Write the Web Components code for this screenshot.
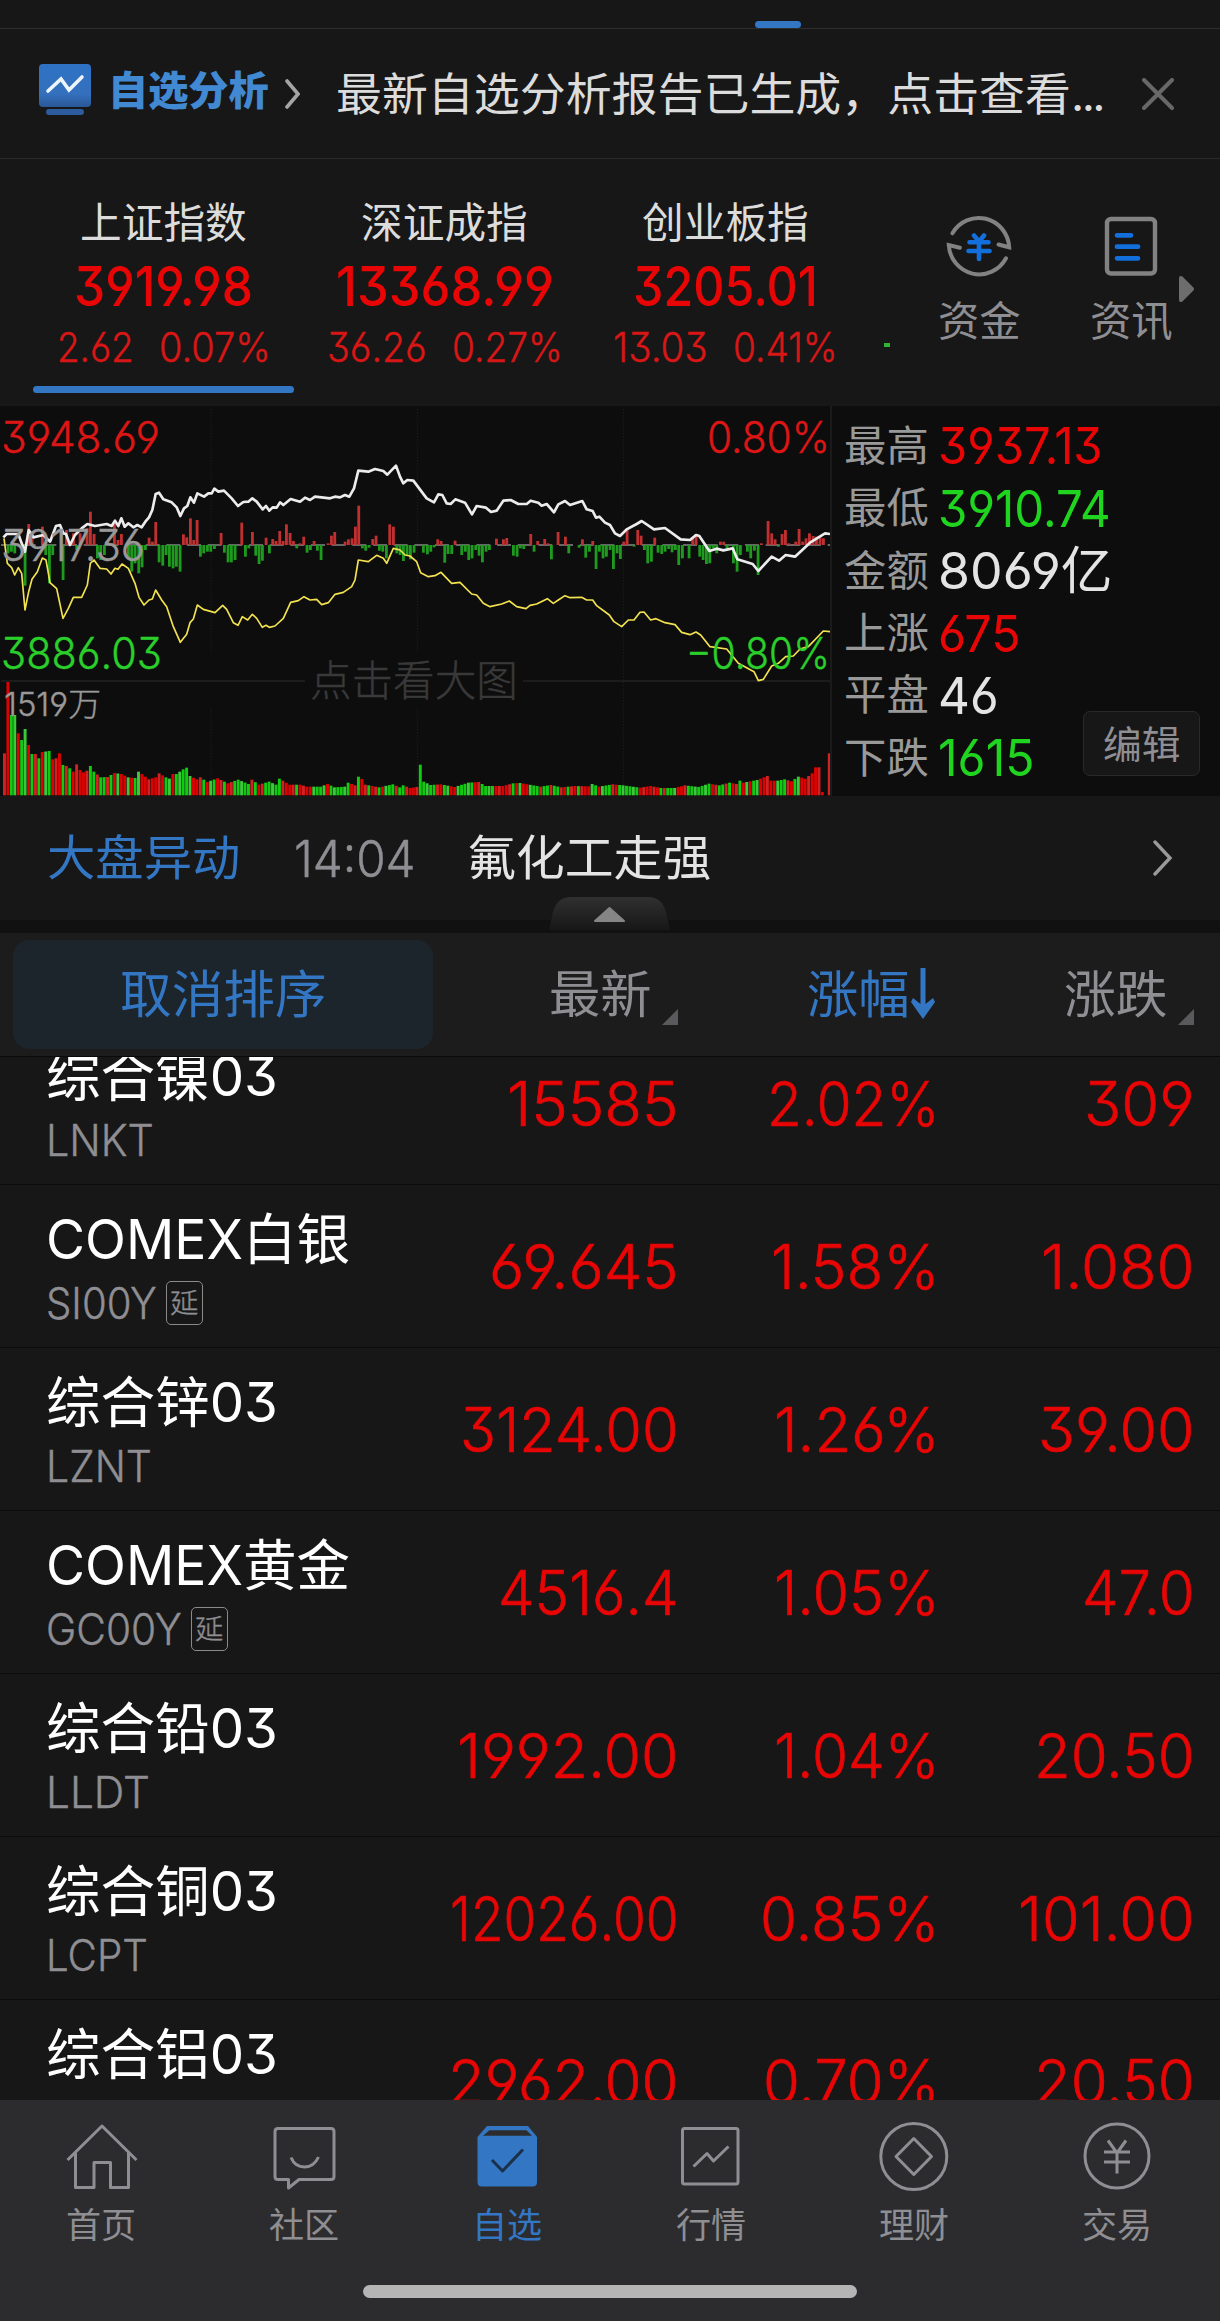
<!DOCTYPE html>
<html lang="zh-CN">
<head>
<meta charset="UTF-8">
<meta name="viewport" content="width=device-width, initial-scale=1.0">
<title>自选</title>
<style>
    :root {
        --bg: #171717;
        --red: #e80505;
        --green: #1fd51f;
        --blue: #3377c4;
        --grey: #8e8e93;
        --light: #e4e4e4;
    }

    body {
        margin: 0;
        background: var(--bg);
        font-family: Inter, "Noto Sans CJK SC", sans-serif;
        font-feature-settings: "cv03", "cv04", "cv09";
    }
</style>
</head>
<body>
<stock-app></stock-app>

<script>
// Base class: every element puts its template in an open shadow root
class BaseElement extends HTMLElement {
    constructor() {
        super();
        this.attachShadow({ mode: 'open' });
    }

    connectedCallback() {
        this.shadowRoot.innerHTML = this.template();
    }
}

/**
 * Text with a fixed ink width: <fit-text w="174" size="55">3919.98</fit-text>
 * - w: width in px, size: font size in px
 */
class FitText extends BaseElement {
    template() {
        return `
            <style>
                :host { display: inline-block; flex: none; white-space: nowrap; line-height: 1; }
                span { display: inline-block; transform-origin: 0 50%; }
            </style>
            <span><slot></slot></span>
        `;
    }

    connectedCallback() {
        super.connectedCallback();
        const size = Number(this.getAttribute('size'));
        const w = Number(this.getAttribute('w'));
        const bearing = size * 0.045;
        const span = this.shadowRoot.querySelector('span');
        this.style.fontSize = size + 'px';
        this.style.height = size + 'px';
        const scale = (w + bearing * 2) / span.getBoundingClientRect().width;
        this.style.width = w + 'px';
        span.style.transform = `scaleX(${scale})`;
        span.style.marginLeft = -bearing + 'px';
    }
}

class TopStrip extends BaseElement {
    template() {
        return `
            <style>
                :host { display: flex; height: 28px; align-items: flex-end; border-bottom: 1px solid #2d2d2d; }
                i { width: 46px; height: 7px; margin-left: 755px; border-radius: 4px; background: var(--blue); }
            </style>
            <i></i>
        `;
    }
}

class ReportBanner extends BaseElement {
    template() {
        return `
            <style>
                :host { display: flex; align-items: center; height: 130px; box-sizing: border-box; padding: 0 46px 0 39px; border-bottom: 1px solid #2a2a2a; }
                svg { display: block; flex: none; }
                .logo { margin: -7px 19px 0 0; }
                .title { font-weight: 900; color: #4189d3; margin: -6px 18px 0 0; }
                .msg { color: #dcdcdc; margin: 2px 41px 0 38px; }
                .dots { letter-spacing: -2.5px; }
            </style>
            <svg class="logo" width="52" height="52" viewBox="0 0 52 52">
                <defs>
                    <linearGradient id="g" x1="0" y1="0" x2="0" y2="1">
                        <stop offset="0" stop-color="#2e72c4"/><stop offset=".7" stop-color="#3470bd"/><stop offset="1" stop-color="#2a5896"/>
                    </linearGradient>
                </defs>
                <rect width="52" height="43" rx="4" fill="url(#g)"/>
                <path d="M9 27L22 15L30 26L43 13" fill="none" stroke="#eef4fb" stroke-width="3.6" stroke-linecap="round"/>
                <rect x="7" y="45" width="38" height="6" rx="3" fill="#2c5c9d"/>
            </svg>
            <fit-text class="title" w="157" size="40">自选分析</fit-text>
            <svg width="15" height="32" viewBox="0 0 15 32"><path d="M2 3L13 16L2 29" fill="none" stroke="#a5a5a5" stroke-width="3.6" stroke-linecap="round"/></svg>
            <fit-text class="msg" w="763" size="45">最新自选分析报告已生成，点击查看<span class="dots">...</span></fit-text>
            <svg width="32" height="32" viewBox="0 0 32 32"><path d="M2 2L30 30M30 2L2 30" stroke="#686868" stroke-width="4" stroke-linecap="round"/></svg>
        `;
    }
}

class IndexCard extends BaseElement {
    template() {
        const [price, change, pct] = ['price', 'change', 'pct'].map(k => this.getAttribute(k).split('|'));
        return `
            <style>
                :host { display: flex; flex-direction: column; align-items: center; flex: none; width: 281px; height: 247px; box-sizing: border-box; padding-top: 43px; color: var(--red); }
                .name { color: #dcdcdc; }
                .price { margin-top: 15px; font-weight: 500; }
                .row { display: flex; gap: 29px; margin: 13px 0 18px; font-weight: 300; -webkit-text-stroke: 0.4px; color: #d81616; }
                i { width: 261px; height: 7px; border-radius: 4px; }
                :host([active]) i { background: var(--blue); }
            </style>
            <fit-text class="name" w="163" size="42"><slot></slot></fit-text>
            <fit-text class="price" w="${price[1]}" size="55">${price[0]}</fit-text>
            <div class="row">
                <fit-text w="${change[1]}" size="41">${change[0]}</fit-text>
                <fit-text w="${pct[1]}" size="41">${pct[0]}</fit-text>
            </div>
            <i></i>
        `;
    }
}

class IndexBar extends BaseElement {
    template() {
        return `
            <style>
                :host { display: flex; height: 247px; padding-left: 23px; overflow: hidden; }
                .dash { width: 6px; height: 4px; margin: 184px 49px 0 18px; background: #2fb52f; }
                .tool { display: flex; flex-direction: column; align-items: center; width: 80px; margin-right: 72px; padding-top: 52px; color: var(--grey); }
                .tool svg { margin-bottom: 20px; }
                .more { margin: 116px 0 0 -65px; }
            </style>
            <index-card active price="3919.98|174" change="2.62|73" pct="0.07%|108">上证指数</index-card>
            <index-card price="13368.99|213" change="36.26|96" pct="0.27%|107">深证成指</index-card>
            <index-card price="3205.01|180" change="13.03|91" pct="0.41%|101">创业板指</index-card>
            <div class="dash"></div>
            <div class="tool">
                <svg width="70" height="70" viewBox="0 0 70 70" fill="none" stroke-linecap="round">
                    <g stroke="#828282" stroke-width="4">
                        <path d="M8.4 22.3A30.5 31 0 0 1 65.2 36.3L54.5 33.5"/>
                        <path d="M62 47.3A30.5 31 0 0 1 4.8 34L15.8 36.7"/>
                    </g>
                    <path d="M30 24.5L35 30.5L40 24.5M25.5 31.3H44.5M24.5 40H45.5M35 31V48" stroke="#126fdb" stroke-width="4.6"/>
                </svg>
                <fit-text w="79" size="41">资金</fit-text>
            </div>
            <div class="tool">
                <svg width="70" height="70" viewBox="0 0 70 70" fill="none" stroke-linecap="round">
                    <rect x="11" y="8" width="48" height="54.5" rx="4" stroke="#828282" stroke-width="4.4"/>
                    <path d="M21 24.3H35M21 35.7H42M21 47.3H42" stroke="#126fdb" stroke-width="4.8"/>
                </svg>
                <fit-text w="79" size="41">资讯</fit-text>
            </div>
            <svg class="more" width="17" height="28" viewBox="0 0 17 28"><path d="M3 3L14 14L3 25Z" fill="#6d6d6d" stroke="#6d6d6d" stroke-width="4" stroke-linejoin="round"/></svg>
        `;
    }
}

// Chart data, in thirds of a pixel from the chart's origin
const PRICE_LINE = '10,412 20,402 55,402 65,430 75,455 86,390 100,412 130,405 150,425 168,378 180,375 190,400 198,402 210,435 225,405 245,385 262,372 285,378 320,372 335,378 345,362 355,378 364,355 374,380 385,370 400,382 412,375 425,382 436,365 447,352 457,330 467,282 477,278 490,298 515,307 530,322 541,348 552,325 562,318 571,292 582,308 592,280 612,290 625,280 635,280 643,266 655,275 672,272 695,295 714,318 730,306 745,305 757,295 770,305 788,328 798,318 808,332 818,322 830,323 840,307 850,315 872,297 900,305 915,293 930,300 945,290 990,295 1005,290 1020,292 1035,285 1048,290 1062,265 1075,212 1105,215 1125,207 1150,213 1162,224 1188,197 1200,230 1210,250 1222,240 1240,242 1280,295 1302,307 1315,283 1327,285 1340,310 1352,312 1366,298 1395,308 1416,343 1430,318 1458,323 1473,336 1490,332 1510,302 1532,300 1555,312 1580,312 1592,302 1615,308 1625,317 1640,312 1662,337 1675,313 1695,303 1710,315 1747,303 1760,328 1778,333 1788,353 1798,350 1815,368 1830,375 1845,400 1860,408 1880,388 1910,372 1925,363 1962,388 1995,384 2042,418 2070,420 2088,405 2098,408 2128,453 2150,446 2170,451 2198,445 2212,478 2258,492 2275,513 2315,470 2337,482 2357,465 2385,470 2430,428 2475,400 2490,402';
const AVG_LINE = '12,415 22,490 35,503 44,525 55,503 65,520 75,630 86,575 96,538 112,515 127,474 138,480 150,548 170,566 189,655 205,625 220,592 245,592 262,555 271,490 282,480 300,505 320,507 333,522 345,505 354,508 366,492 385,505 405,550 417,592 432,615 447,600 457,597 467,570 485,600 500,620 520,680 541,727 560,703 570,668 580,657 592,615 610,628 645,638 668,616 680,628 700,668 714,676 727,650 743,660 757,643 770,655 787,682 798,676 808,682 825,678 850,655 872,607 895,602 912,590 930,600 950,598 965,614 985,608 1005,583 1030,577 1055,560 1065,540 1075,480 1105,485 1130,466 1150,475 1160,490 1180,445 1200,450 1215,465 1230,468 1250,485 1262,518 1285,530 1305,527 1323,517 1355,550 1380,547 1415,582 1430,585 1450,610 1470,620 1505,612 1528,603 1550,620 1578,626 1590,616 1610,612 1642,596 1660,610 1675,600 1695,587 1710,593 1745,592 1760,600 1778,600 1790,617 1828,645 1842,665 1865,680 1885,660 1902,660 1920,637 1932,636 1952,660 1968,656 1995,668 2025,674 2045,697 2070,704 2088,696 2102,705 2130,740 2180,747 2215,790 2262,815 2275,842 2290,838 2315,798 2335,790 2357,770 2380,768 2400,747 2425,740 2470,693 2490,695';
// Ends of the bars that rise above or drop under the middle line: x,y
const FLOW_BARS = '24,460 34,455 44,460 75,557 86,372 96,395 127,380 137,465 148,550 158,465 189,540 199,390 220,400 230,450 240,400 261,385 271,335 282,402 292,475 302,480 313,465 343,372 354,420 364,402 385,475 395,515 405,490 416,520 426,502 436,450 447,413 457,425 467,366 477,487 488,497 498,465 508,500 519,505 529,500 540,515 550,403 560,412 571,355 581,420 591,360 601,470 611,460 622,455 632,455 643,447 663,399 673,458 684,487 694,487 705,480 725,368 736,470 746,445 757,396 767,467 777,492 787,482 798,413 808,460 818,417 828,423 839,393 849,423 859,373 870,399 880,423 890,445 900,430 911,410 921,458 931,450 942,423 952,452 963,480 984,430 994,407 1004,396 1035,425 1045,418 1056,415 1066,380 1076,317 1087,445 1097,452 1107,443 1118,417 1128,407 1138,452 1148,455 1159,475 1169,373 1180,380 1190,460 1200,465 1210,483 1221,465 1231,478 1242,458 1270,458 1282,463 1292,455 1302,442 1313,418 1323,423 1334,488 1344,462 1355,462 1365,422 1385,465 1396,455 1406,480 1416,475 1427,450 1437,467 1447,487 1458,455 1468,450 1489,416 1510,418 1520,414 1540,467 1551,470 1561,445 1571,447 1592,402 1602,455 1613,423 1634,417 1644,430 1654,478 1674,396 1696,410 1706,460 1737,443 1747,418 1757,473 1768,455 1778,423 1788,507 1798,455 1809,475 1819,470 1830,450 1840,507 1851,460 1861,477 1871,425 1881,385 1902,440 1913,390 1923,407 1933,450 1943,490 1954,485 1964,413 1974,458 1985,462 1995,455 2006,447 2016,457 2026,450 2036,495 2047,475 2067,475 2078,413 2088,402 2099,470 2109,480 2119,492 2129,490 2140,445 2150,460 2161,425 2171,425 2181,445 2200,490 2211,515 2221,465 2242,455 2252,475 2263,452 2274,525 2284,430 2304,363 2315,400 2325,418 2335,440 2346,402 2356,390 2366,430 2387,425 2397,387 2408,425 2418,415 2428,400 2439,408 2449,410 2460,412 2470,415';
// Volume: one letter per minute for its colour, and index:height with straight runs between
const VOLUME_COLORS = 'rrggrggrgrgrggrrrgrgrrrrrggrggrgrgrrgrggrrrrrrrggrgggggrrrgrggrrgrrgggggrgrrgggggrrrrgrrrrggggrggggggrrgrrgrrgrgggrggrrrr' +
    'gggggrrggrrgggggrrggggrrrrrgrgrrgggrggrggrrgrrgrrrggrgggrrggggggrrrrrrgrgggrrrgggggggrrggrgrrgrgrggrrrrrgggrrggrrrrrrrr';
const VOLUME = '0:126 1:340 2:241 3:241 4:186 5:166 6:199 7:151 8:124 9:124 10:111 11:130 13:133 14:108 15:111 16:126 17:91 18:88 19:81 20:71 21:93 22:76 23:69 24:74 25:88 26:71 28:54 30:55 32:67 34:64 36:54 38:52 39:71 40:64 42:48 44:54 45:66 47:54 48:50 49:64 50:64 52:78 53:83 54:58 56:48 57:54 59:40 62:51 65:36 68:47 71:34 72:47 74:32 77:41 79:32 80:50 83:32 86:32 88:26 92:26 94:34 96:24 99:26 100:38 102:30 103:56 104:49 105:32 109:24 113:33 115:24 116:30 118:22 120:25 121:92 122:41 124:31 127:33 131:25 135:38 138:40 140:28 145:28 148:36 150:37 156:26 159:31 162:24 166:28 170:27 171:34 173:26 177:33 180:30 185:23 188:28 191:22 195:22 198:30 202:25 205:35 208:30 211:38 213:34 214:44 215:38 219:46 222:58 223:44 225:44 227:48 229:42 231:56 233:50 235:66 236:84 237:84';

class TrendChart extends BaseElement {
    flowBars() {
        return FLOW_BARS.split(' ').map(p => {
            const [x, y] = p.split(',').map(Number);
            return `<rect x="${x - 4}" y="${Math.min(435, y)}" width="8.5" height="${Math.abs(y - 435)}" fill="${y < 435 ? '#c03030' : '#1e9a1e'}"/>`;
        }).join('');
    }

    volumeBars() {
        const keys = VOLUME.split(' ').map(p => p.split(':').map(Number));
        const heightAt = i => {
            const n = keys.findIndex(k => k[0] >= i);
            const b = keys[n];
            const a = keys[n - 1] || b;
            return b[0] === a[0] ? b[1] : a[1] + (b[1] - a[1]) * (i - a[0]) / (b[0] - a[0]);
        };
        // closing minutes: a nearly empty one, a gap, then the last bar
        const tail = { 238: 10, 239: 0, 240: 126 };
        let out = '';
        for (let i = 0; i <= 240; i++) {
            const h = tail[i] !== undefined ? tail[i] : heightAt(i);
            const red = VOLUME_COLORS[i] !== 'g';
            const shade = i % 3 === 0 ? (red ? '#d02222' : '#3cc83c') : (red ? '#dc0202' : '#10cb10');
            out += `<rect x="${(9 + i * 10.31).toFixed(1)}" y="${(1186 - h).toFixed(1)}" width="8.8" height="${h.toFixed(1)}" fill="${shade}"/>`;
        }
        return out;
    }

    template() {
        return `
            <style>
                :host { display: grid; flex: none; width: 830px; height: 390px; overflow: hidden; font-weight: 300; border-right: 2px solid #1a1a1a; }
                svg, .labels { grid-area: 1 / 1; }
                svg { display: block; }
                .labels { display: flex; flex-direction: column; padding: 10px 2px 0 3px; z-index: 1; -webkit-text-stroke: 0.4px; }
                .line { display: flex; justify-content: space-between; height: 43px; }
                .up { color: #dc1515; }
                .down { color: #2bcf2b; margin-top: 65px; }
                .mid { color: #999; margin-top: 65px; }
                .hint { color: #393939; margin: -15px 0 0 309px; height: 42px; }
                .vol { color: #999; margin: -14px 0 0 2px; }
            </style>
            <svg width="830" height="390" viewBox="0 18 2490 1170">
                <g stroke="#242424" stroke-width="3" stroke-dasharray="3 6">
                    <path d="M633 28V758M633 925V1186M1252 28V758M1252 925V1186M1870 28V1186"/>
                </g>
                <path d="M3 843H915M1569 843H2490" stroke="#222" stroke-width="5"/>
                <path d="M3 435H2490" stroke="#858585" stroke-width="4" stroke-dasharray="42 20"/>
                ${this.flowBars()}
                ${this.volumeBars()}
                <polyline points="${AVG_LINE}" fill="none" stroke="#f3e250" stroke-width="5" stroke-linejoin="round"/>
                <polyline points="${PRICE_LINE}" fill="none" stroke="#ececec" stroke-width="8" stroke-linejoin="round"/>
            </svg>
            <div class="labels">
                <div class="line up"><fit-text w="155" size="43">3948.69</fit-text><fit-text w="119" size="43">0.80%</fit-text></div>
                <div class="line mid"><fit-text w="140" size="43">3917.36</fit-text></div>
                <div class="line down"><fit-text w="157" size="43">3886.03</fit-text><fit-text w="140" size="43">−0.80%</fit-text></div>
                <fit-text class="hint" w="204" size="42">点击看大图</fit-text>
                <fit-text class="vol" w="94" size="33">1519万</fit-text>
            </div>
        `;
    }
}

class MarketStats extends BaseElement {
    template() {
        const rows = [
            ['最高', '3937.13', 160, 'red'],
            ['最低', '3910.74', 168, 'green'],
            ['金额', '8069亿', 170, 'light'],
            ['上涨', '675', 78, 'red'],
            ['平盘', '46', 56, 'light'],
            ['下跌', '1615', 92, 'green']
        ];
        return `
            <style>
                :host { display: flex; flex: 1; justify-content: space-between; align-items: flex-end; padding: 0 20px 0 14px; color: #999; }
                .rows { padding-bottom: 7px; }
                .row { display: flex; align-items: center; gap: 13px; height: 62.4px; }
                .edit { display: flex; flex: none; align-items: center; justify-content: center; width: 115px; height: 63px; margin: 0 0 20px -30px; border: 1px solid #292929; border-radius: 7px; background: #171717; color: var(--grey); }
            </style>
            <div class="rows">
                ${rows.map(([label, value, w, color]) => `
                    <div class="row">
                        <fit-text w="81" size="42">${label}</fit-text>
                        <fit-text w="${w}" size="51" style="color: var(--${color})">${value}</fit-text>
                    </div>`).join('')}
            </div>
            <div class="edit"><fit-text w="74" size="38">编辑</fit-text></div>
        `;
    }
}

class NewsRow extends BaseElement {
    template() {
        return `
            <style>
                :host { display: flex; position: relative; align-items: center; height: 124px; box-sizing: border-box; padding: 0 47px 0 49px; }
                .tag { color: var(--blue); margin-right: 58px; }
                .time { color: var(--grey); font-weight: 300; -webkit-text-stroke: 0.5px; margin-right: 56px; }
                .text { color: var(--light); }
                .arrow { margin-left: auto; }
                .fold { position: absolute; left: 549px; top: 101px; }
            </style>
            <fit-text class="tag" w="189" size="48">大盘异动</fit-text>
            <fit-text class="time" w="117" size="51">14:04</fit-text>
            <fit-text class="text" w="240" size="48">氟化工走强</fit-text>
            <svg class="arrow" width="20" height="38" viewBox="0 0 20 38"><path d="M2 3L17 19L2 35" fill="none" stroke="#9a9a9a" stroke-width="3.4" stroke-linecap="round"/></svg>
            <svg class="fold" width="121" height="33" viewBox="0 0 121 33">
                <defs><linearGradient id="f" x1="0" y1="0" x2="0" y2="1"><stop offset="0" stop-color="#303030"/><stop offset="1" stop-color="#171717"/></linearGradient></defs>
                <path d="M0 33L4 15Q8 0 22 0H99Q113 0 117 15L121 33Z" fill="url(#f)"/>
                <path d="M46 24L60.500 11L75 24Z" fill="#858585" stroke="#858585" stroke-width="2" stroke-linejoin="round"/>
            </svg>
        `;
    }
}

class SortHeader extends BaseElement {
    template() {
        const corner = '<svg width="16" height="16" viewBox="0 0 16 16"><path d="M16 0V16H0Z" fill="#5a5a5c"/></svg>';
        return `
            <style>
                :host { display: grid; grid-template-columns: 433px 245px 257px 259px; align-items: center; height: 123px; border-top: 13px solid #111; border-bottom: 1px solid #0a0a0a; background: #1c1c1c; color: var(--grey); }
                .cancel { display: flex; align-items: center; justify-content: center; height: 109px; margin-left: 13px; border-radius: 16px; background: #1c242c; color: var(--blue); }
                .col { display: flex; justify-content: flex-end; align-items: center; gap: 13px; }
                .col svg { margin-top: 45px; }
                .on { color: var(--blue); gap: 4px; }
                .on svg { margin-top: -2px; }
            </style>
            <div class="cancel"><fit-text w="202" size="51">取消排序</fit-text></div>
            <div class="col"><fit-text w="98" size="51">最新</fit-text>${corner}</div>
            <div class="col on"><fit-text w="98" size="51">涨幅</fit-text><svg width="24" height="51" viewBox="0 0 24 51"><path d="M9.500 0H14.500V36L22 30L24 34L12 51L0 34L2 30L9.500 36Z" fill="#3377c4"/></svg></div>
            <div class="col"><fit-text w="99" size="51">涨跌</fit-text>${corner}</div>
        `;
    }
}

class QuoteRow extends BaseElement {
    template() {
        const cell = key => {
            const [text, w] = this.getAttribute(key).split('|');
            return `<fit-text class="num" w="${w}" size="62">${text}</fit-text>`;
        };
        const [name, nameW] = this.getAttribute('name').split('|');
        const [code, codeW] = (this.getAttribute('code') || '').split('|');
        return `
            <style>
                :host { display: grid; grid-template-columns: 400px 276px 261px 255px; height: 163px; box-sizing: border-box; border-bottom: 1px solid #0c0c0c; }
                .title { display: flex; flex-direction: column; padding: 27px 0 0 48px; color: #fff; }
                .code { display: flex; align-items: center; gap: 11px; height: 46px; margin-top: 13px; color: var(--grey); font-weight: 300; -webkit-text-stroke: 0.4px; }
                .tag { display: flex; align-items: center; justify-content: center; width: 35px; height: 42px; border: 1px solid #8a8a8a; border-radius: 5px; }
                .num { justify-self: end; margin-top: 51px; color: var(--red); font-weight: 300; -webkit-text-stroke: 0.7px; }
            </style>
            <div class="title">
                <fit-text w="${nameW}" size="55">${name}</fit-text>
                <div class="code">
                    ${code ? `<fit-text w="${codeW}" size="43">${code}</fit-text>` : ''}
                    ${this.hasAttribute('delayed') ? '<div class="tag"><fit-text w="26" size="27">延</fit-text></div>' : ''}
                </div>
            </div>
            ${cell('last')}${cell('pct')}${cell('change')}
        `;
    }
}

class QuoteList extends BaseElement {
    template() {
        // the list is scrolled, so its first row starts above the edge
        return `
            <style>
                :host { display: block; height: 1043px; overflow: hidden; }
                div { margin-top: -35px; }
            </style>
            <div>
                <quote-row name="综合镍03|227" code="LNKT|104" last="15585|166" pct="2.02%|167" change="309|105"></quote-row>
                <quote-row name="COMEX白银|299" code="SI00Y|107" delayed last="69.645|184" pct="1.58%|163" change="1.080|148"></quote-row>
                <quote-row name="综合锌03|227" code="LZNT|102" last="3124.00|213" pct="1.26%|160" change="39.00|151"></quote-row>
                <quote-row name="COMEX黄金|299" code="GC00Y|132" delayed last="4516.4|175" pct="1.05%|160" change="47.0|107"></quote-row>
                <quote-row name="综合铅03|227" code="LLDT|100" last="1992.00|216" pct="1.04%|160" change="20.50|155"></quote-row>
                <quote-row name="综合铜03|227" code="LCPT|98" last="12026.00|223" pct="0.85%|174" change="101.00|171"></quote-row>
                <quote-row name="综合铝03|227" last="2962.00|225" pct="0.70%|171" change="20.50|155"></quote-row>
            </div>
        `;
    }
}

class TabItem extends BaseElement {
    template() {
        const icons = {
            home: '<path d="M5.500 43L40 9L74.500 43M13.500 36V70.500H32V45.500H48.500V70.500H66.500V36"/>',
            chat: '<path d="M13 11.500H66Q69 11.500 69 14.500V59.500Q69 62.500 66 62.500H34L23.500 71V62.500H13Q10 62.500 10 59.500V14.500Q10 11.500 13 11.500Z"/><path d="M26 40.500Q30 50 39.500 50Q49 50 53.500 40"/>',
            check: '<path d="M19 9H60L69 20V65Q69 69.500 64.500 69.500H14Q9.500 69.500 9.500 65V20Z" fill="currentColor" stroke="none"/><path d="M21.500 13.300H58.500L64 18.700H15Z" fill="#2c2c2e" stroke="none"/><path d="M24 43L34.500 54L55 32.500" stroke="#1c3048"/>',
            trend: '<rect x="10.500" y="11.500" width="55.500" height="55.500" rx="2"/><path d="M21.500 49.500L35 36.500L41.500 44L56.500 29.500"/>',
            wealth: '<circle cx="38.800" cy="39.500" r="33"/><path d="M38.800 21.500L56.500 39.500L38.800 57.500L21 39.500Z"/>',
            trade: '<circle cx="39" cy="39" r="32"/><path d="M30 23.500L39 36L48 23.500M26 35H52M26 45H52M39 36V56.500"/>'
        };
        return `
            <style>
                :host { display: flex; flex: 1; flex-direction: column; align-items: center; padding-top: 17px; color: var(--grey); }
                :host([active]) { color: var(--blue); }
                svg { display: block; margin-bottom: 11px; }
                fit-text { margin-right: 2px; }
            </style>
            <svg width="80" height="80" viewBox="0 0 80 80" fill="none" stroke="currentColor" stroke-width="3" stroke-linejoin="round">${icons[this.getAttribute('icon')]}</svg>
            <fit-text w="67" size="35"><slot></slot></fit-text>
        `;
    }
}

class TabBar extends BaseElement {
    template() {
        return `
            <style>
                :host { display: flex; flex-direction: column; height: 221px; background: #2c2c2e; }
                nav { display: flex; height: 185px; }
                i { align-self: center; width: 494px; height: 13px; border-radius: 7px; background: #b5b5b5; }
            </style>
            <nav>
                <tab-item icon="home">首页</tab-item>
                <tab-item icon="chat">社区</tab-item>
                <tab-item icon="check" active>自选</tab-item>
                <tab-item icon="trend">行情</tab-item>
                <tab-item icon="wealth">理财</tab-item>
                <tab-item icon="trade">交易</tab-item>
            </nav>
            <i></i>
        `;
    }
}

class StockApp extends BaseElement {
    template() {
        return `
            <style>
                :host { display: block; width: 1220px; height: 2321px; overflow: hidden; background: var(--bg); }
                .market { display: flex; height: 390px; background: #0d0d0d; }
            </style>
            <top-strip></top-strip>
            <report-banner></report-banner>
            <index-bar></index-bar>
            <div class="market">
                <trend-chart></trend-chart>
                <market-stats></market-stats>
            </div>
            <news-row></news-row>
            <sort-header></sort-header>
            <quote-list></quote-list>
            <tab-bar></tab-bar>
        `;
    }
}

// Register the custom elements
customElements.define('fit-text', FitText);
customElements.define('top-strip', TopStrip);
customElements.define('report-banner', ReportBanner);
customElements.define('index-card', IndexCard);
customElements.define('index-bar', IndexBar);
customElements.define('trend-chart', TrendChart);
customElements.define('market-stats', MarketStats);
customElements.define('news-row', NewsRow);
customElements.define('sort-header', SortHeader);
customElements.define('quote-row', QuoteRow);
customElements.define('quote-list', QuoteList);
customElements.define('tab-item', TabItem);
customElements.define('tab-bar', TabBar);
customElements.define('stock-app', StockApp);
</script>
</body>
</html>
